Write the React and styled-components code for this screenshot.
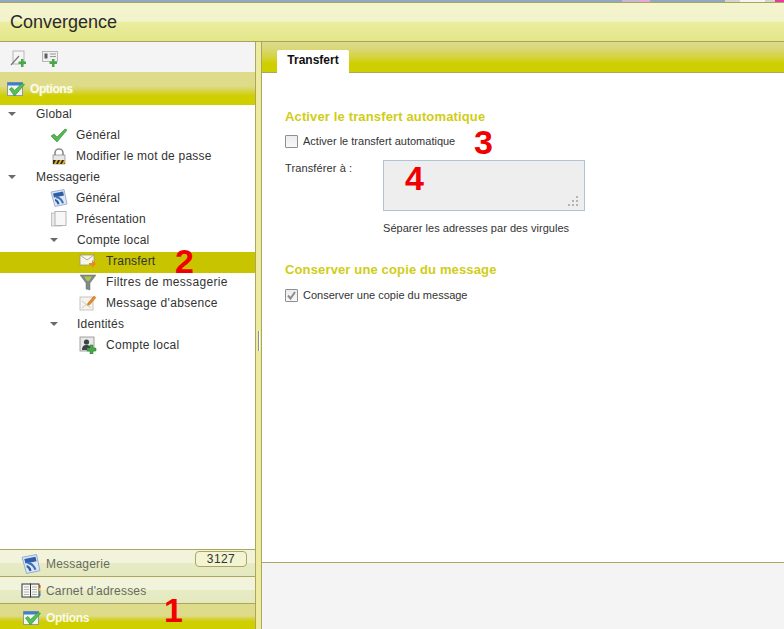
import styled, { createGlobalStyle } from "styled-components";

const GlobalStyle = createGlobalStyle`
  html, body {
    margin: 0;
    padding: 0;
    height: 100%;
    overflow: hidden;
    background: #fff;
  }
  #root {
    height: 100%;
  }
`;

const Page = styled.div`
  position: relative;
  width: 784px;
  height: 629px;
  display: flex;
  flex-direction: column;
  font-family: "Liberation Sans", Arial, sans-serif;
  font-size: 12px;
  color: #333;
  overflow: hidden;
`;

const TopStrip = styled.div`
  height: 3px;
  flex: none;
  box-sizing: border-box;
  border-bottom: 1px solid #a9a65a;
  background: linear-gradient(
    90deg,
    #8fa9c4 0 622px,
    #c8b6d4 622px 640px,
    #e8a8dc 640px 650px,
    #8fa9c4 650px 725px,
    #d8d4cc 725px 740px,
    #f4f4f4 740px 765px,
    #d8d4cc 765px 775px,
    #e83a9a 775px 784px
  );
`;

const Header = styled.div`
  height: 39px;
  flex: none;
  box-sizing: border-box;
  border-bottom: 1px solid #a8a35c;
  background: linear-gradient(180deg, #f4f5d0 0%, #f2f3cb 48%, #ebeda0 50%, #e3e688 100%);
  padding: 9px 0 0 10px;
  font-size: 18px;
  color: #2a2a2a;
`;

const Body = styled.div`
  flex: 1;
  display: flex;
  min-height: 0;
`;

const Sidebar = styled.div`
  width: 255px;
  flex: none;
  display: flex;
  flex-direction: column;
`;

const Toolbar = styled.div`
  height: 30px;
  flex: none;
  display: flex;
  align-items: center;
  gap: 15px;
  padding: 2px 0 0 10px;
  box-sizing: border-box;
  background: #f4f4f4;
`;

const ToolIcon = styled.svg`
  width: 17px;
  height: 17px;
  display: block;
`;

const Band = styled.div`
  height: 33px;
  flex: none;
  display: flex;
  align-items: center;
  gap: 5px;
  padding-left: 7px;
  box-sizing: border-box;
  background: linear-gradient(180deg, #dedb8b 0%, #dedb8b 42%, #d4d233 62%, #cfcf00 72%, #cfcf00 100%);
  color: #fbfbe8;
  font-weight: bold;
  letter-spacing: -0.4px;
  text-shadow: 0 0 2px #e8e8a8;
`;

const Tree = styled.div`
  flex: 1;
  min-height: 0;
  background: #fff;
`;

const Row = styled.div`
  height: 21px;
  box-sizing: border-box;
  padding-bottom: 3px;
  display: flex;
  align-items: center;
  padding-left: ${(p) => p.$indent}px;
  background: ${(p) => (p.$selected ? "#c8c400" : "transparent")};
  color: #333;
  letter-spacing: ${(p) => p.$spacing || 0.2}px;
`;

const Arrow = styled.span`
  width: 0;
  height: 0;
  flex: none;
  margin-right: ${(p) => p.$gap}px;
  margin-top: -1px;
  border-left: 4px solid transparent;
  border-right: 4px solid transparent;
  border-top: 4px solid #6a6a6a;
`;

const RowIcon = styled.span`
  width: 18px;
  height: 18px;
  flex: none;
  margin-right: ${(p) => p.$gap}px;
  display: flex;
  align-items: center;
  justify-content: center;
`;

const Svg = styled.svg`
  width: 18px;
  height: 18px;
  display: block;
`;

const Accordion = styled.div`
  height: 27px;
  flex: none;
  display: flex;
  align-items: center;
  box-sizing: border-box;
  padding: 2px 8px 0 21px;
  gap: 5px;
  border-top: 1px solid #aca75e;
  background: linear-gradient(180deg, #f1f4da 0%, #f1f4da 50%, #e6ebc4 52%, #e4e9bf 100%);
  color: #6a6a5c;
  letter-spacing: 0.2px;
`;

const ActiveAccordion = styled(Accordion)`
  height: 26px;
  padding: 3px 8px 0 23px;
  background: linear-gradient(180deg, #dedb8b 0%, #dedb8b 48%, #d4d233 60%, #cfcf00 72%, #cfcf00 100%);
  color: #fbfbe8;
  font-weight: bold;
  letter-spacing: -0.3px;
`;

const AccordionLabel = styled.span`
  flex: 1;
`;

const Count = styled.span`
  width: 52px;
  height: 16px;
  margin-top: -10px;
  box-sizing: border-box;
  border: 1px solid #aca75e;
  border-radius: 4px;
  background: #f3f4d2;
  color: #333;
  display: flex;
  align-items: center;
  justify-content: center;
  letter-spacing: 0.4px;
`;

const Splitter = styled.div`
  width: 7px;
  flex: none;
  box-sizing: border-box;
  background: #eceb9f;
  border-left: 1px solid #aca75e;
  border-right: 1px solid #aca75e;
  display: flex;
  align-items: center;
  justify-content: center;
`;

const Grip = styled.div`
  width: 2px;
  height: 20px;
  margin-top: 10px;
  background: linear-gradient(90deg, #8a8f96 50%, #fff 50%);
`;

const Main = styled.div`
  flex: 1;
  min-width: 0;
  display: flex;
  flex-direction: column;
`;

const TabBar = styled.div`
  height: 31px;
  flex: none;
  box-sizing: border-box;
  padding: 8px 0 0 15px;
  border-bottom: 1px solid #aca75e;
  background: linear-gradient(180deg, #dedb8b 0%, #dad87c 20%, #d4d233 55%, #cfcf00 70%, #cfcf00 100%);
`;

const Tab = styled.div`
  width: 72px;
  height: 23px;
  box-sizing: border-box;
  background: #fff;
  border-radius: 2px 2px 0 0;
  color: #111;
  font-weight: bold;
  text-align: center;
  padding-top: 3px;
`;

const Content = styled.div`
  flex: 1;
  min-height: 0;
  background: #fff;
  padding: 36px 0 0 23px;
  box-sizing: border-box;
`;

const SectionTitle = styled.div`
  color: #d0cd16;
  font-size: 13px;
  font-weight: bold;
  line-height: 15px;
  letter-spacing: 0.14px;
`;

const CheckRow = styled.div`
  display: flex;
  align-items: center;
  gap: 5px;
  height: 16px;
  margin-top: ${(p) => p.$top}px;
  font-size: 11px;
  color: #333;
`;

const Box = styled.span`
  width: 13px;
  height: 13px;
  box-sizing: border-box;
  border: 1px solid #8f8f8f;
  border-radius: 1px;
  background: linear-gradient(180deg, #ececec, #f8f8f8);
  display: flex;
  align-items: center;
  justify-content: center;
`;

const FormRow = styled.div`
  display: flex;
  margin-top: 11px;
`;

const FieldLabel = styled.div`
  width: 98px;
  flex: none;
  font-size: 11px;
  line-height: 13px;
  letter-spacing: 0.12px;
  padding-top: 2px;
  color: #333;
`;

const Field = styled.div`
  position: relative;
  width: 202px;
  height: 51px;
  box-sizing: border-box;
  border: 1px solid #b0c4d8;
  background: #eeeeee;
`;

const ResizeGrip = styled.svg`
  position: absolute;
  right: 5px;
  bottom: 4px;
  width: 11px;
  height: 11px;
`;

const Hint = styled.div`
  margin: 11px 0 0 98px;
  font-size: 11px;
  line-height: 13px;
  color: #333;
  letter-spacing: 0.04px;
`;

const SecondTitle = styled(SectionTitle)`
  margin-top: 27px;
`;

const Footer = styled.div`
  height: 67px;
  flex: none;
  box-sizing: border-box;
  border-top: 1px solid #aca75e;
  background: #f4f4f4;
`;

const Marker = styled.span`
  position: absolute;
  left: ${(p) => p.$x}px;
  top: ${(p) => p.$y}px;
  color: #f00000;
  font-size: 34px;
  line-height: 26px;
  font-weight: bold;
`;

const OptionsIcon = () => (
  <svg width="18" height="18" viewBox="0 0 18 18" style={{ display: "block" }}>
    <rect x="0.5" y="2.5" width="15" height="13" fill="#f4f4ee" stroke="#8a9aa8" />
    <rect x="0.5" y="2.5" width="15" height="3" fill="#3f7fc8" />
    <path d="M2.5 9l2.5-1.5 2.5 3 7.5-7 2.5 1-10 11.5z" fill="#55c055" stroke="#2c8a2c" strokeWidth="0.6" />
  </svg>
);

const CheckIcon = () => (
  <Svg viewBox="0 0 18 18">
    <path d="M1 10l3-2 3 3 8-8 2 1-10 12z" fill="#55b855" stroke="#2e8a2e" strokeWidth="0.6" />
  </Svg>
);

const LockIcon = () => (
  <Svg viewBox="0 0 18 18">
    <path d="M5 9V6a4 4 0 0 1 8 0v3" fill="none" stroke="#8d8d8d" strokeWidth="1.6" />
    <rect x="3" y="8" width="12" height="9" fill="#e8e8e8" stroke="#777" strokeWidth="0.6" />
    <rect x="3" y="13" width="12" height="4" fill="#2c2c2c" />
    <path d="M4 17l2-4h2l-2 4zm4 0l2-4h2l-2 4zm4 0l2-4h1v3l-1 1z" fill="#e0b020" />
  </Svg>
);

const MailAppIcon = ({ size = 18 }) => (
  <svg width={size} height={size} viewBox="0 0 18 18" style={{ display: "block" }}>
    <path d="M1 3l13-2.5 3 14.500-12 2.500z" fill="#dfe7f4" stroke="#8ea2c8" strokeWidth="0.8" />
    <path d="M3 4.500l10-2 1 4-10 2z" fill="#2d5ea8" />
    <path d="M5 7c4 0 7 2 9 7l-2 .5c-1-3-3-5-6-5.500z" fill="#3a74c0" />
    <path d="M5 10c2 .5 4 2 4.500 5l-2 .5c-.5-2-1.500-3-2.500-3.500z" fill="#2d5ea8" />
  </svg>
);

const PagesIcon = () => (
  <Svg viewBox="0 0 18 18">
    <rect x="1.5" y="3" width="10" height="13" fill="#e9e9e9" stroke="#b5b5b5" strokeWidth="0.8" />
    <rect x="5" y="1.5" width="11" height="14" fill="#f7f7f7" stroke="#a6a6a6" strokeWidth="0.8" />
  </Svg>
);

const ForwardIcon = () => (
  <Svg viewBox="0 0 18 18">
    <rect x="1" y="3" width="14" height="10" fill="#f7f6ee" stroke="#9a9a80" strokeWidth="0.8" />
    <path d="M1 3l7 5 7-5" fill="none" stroke="#a0a080" strokeWidth="0.8" />
    <path d="M10 11h3V8l4 4-4 4v-3h-3z" fill="#e88a22" />
  </Svg>
);

const FilterIcon = () => (
  <Svg viewBox="0 0 18 18">
    <path d="M1 2h16l-6 8v7l-4-1v-6z" fill="#7f8a88" stroke="#69736f" strokeWidth="0.5" />
    <path d="M5 3.500h8l-3 4.500h-2z" fill="#a8c84a" />
  </Svg>
);

const AbsenceIcon = () => (
  <Svg viewBox="0 0 18 18">
    <rect x="1" y="3" width="13" height="13" fill="#f4f4f0" stroke="#b8b8ae" strokeWidth="0.8" />
    <path d="M3 7l9 7M12 7l-9 7" stroke="#c4c0a8" strokeWidth="0.8" />
    <path d="M9 9l6-7 2 1.500-6 7-2.500 1z" fill="#e88a22" stroke="#b85a18" strokeWidth="0.4" />
  </Svg>
);

const AccountIcon = () => (
  <Svg viewBox="0 0 18 18">
    <rect x="1" y="1" width="14" height="14" fill="#e8e8e4" stroke="#8d8d8d" strokeWidth="0.8" />
    <circle cx="7.5" cy="6" r="2.6" fill="#3d4448" />
    <path d="M3 14c0-4 2-5 4.500-5s4.500 1 4.500 5z" fill="#3d4448" />
    <path d="M11 9h3v3h3v3h-3v3h-3v-3H8v-3h3z" fill="#48a848" stroke="#2c7a2c" strokeWidth="0.5" />
  </Svg>
);

const BookIcon = () => (
  <svg width="20" height="18" viewBox="0 0 20 18" style={{ display: "block" }}>
    <rect x="1" y="2" width="8.500" height="13" fill="#f6f6f2" stroke="#333" strokeWidth="1" />
    <rect x="9.500" y="2" width="8.500" height="13" fill="#f6f6f2" stroke="#333" strokeWidth="1" />
    <path d="M3 5h5M3 7.500h5M3 10h5M3 12.500h5M11 5h5M11 7.500h5M11 10h5M11 12.500h5" stroke="#a5a5a5" strokeWidth="0.8" />
    <rect x="18" y="3" width="1.500" height="3" fill="#d8402c" />
    <rect x="18" y="6" width="1.500" height="3" fill="#e8b020" />
    <rect x="18" y="9" width="1.500" height="3" fill="#4a9a44" />
    <rect x="18" y="12" width="1.500" height="2" fill="#3f6fc0" />
  </svg>
);

const App = () => {
  return (
    <Page>
      <GlobalStyle />
      <TopStrip />
      <Header>Convergence</Header>
      <Body>
        <Sidebar>
          <Toolbar>
            <ToolIcon viewBox="0 0 17 17">
              <rect x="3" y="1" width="11" height="13" fill="#f6f6f6" stroke="#a8a8a8" strokeWidth="0.8" />
              <path d="M1 15L9 6" stroke="#777" strokeWidth="1.2" />
              <path d="M11 9h2.500v2.500H16v2.500h-2.500V17H11v-3H8.500v-2.500H11z" fill="#46a846" />
            </ToolIcon>
            <ToolIcon viewBox="0 0 17 17">
              <rect x="0.5" y="1.5" width="15" height="10" fill="#f0f0f0" stroke="#a8a8a8" strokeWidth="0.8" />
              <rect x="2.500" y="3.500" width="3" height="5" fill="#5a6066" />
              <path d="M8 4h6M8 6.500h6" stroke="#9a9a9a" />
              <path d="M10 9h2.500v2.500H15V14h-2.500v3H10v-3H7.500v-2.500H10z" fill="#46a846" />
            </ToolIcon>
          </Toolbar>
          <Band>
            <OptionsIcon />
            Options
          </Band>
          <Tree>
            <Row $indent={8}><Arrow $gap={20} />Global</Row>
            <Row $indent={50}><RowIcon $gap={8}><CheckIcon /></RowIcon>Général</Row>
            <Row $indent={50}><RowIcon $gap={8}><LockIcon /></RowIcon>Modifier le mot de passe</Row>
            <Row $indent={8}><Arrow $gap={20} />Messagerie</Row>
            <Row $indent={50}><RowIcon $gap={8}><MailAppIcon /></RowIcon>Général</Row>
            <Row $indent={50}><RowIcon $gap={8}><PagesIcon /></RowIcon>Présentation</Row>
            <Row $indent={50}><Arrow $gap={19} />Compte local</Row>
            <Row $indent={79} $selected><RowIcon $gap={9}><ForwardIcon /></RowIcon>Transfert</Row>
            <Row $indent={79} $spacing={0.34}><RowIcon $gap={9}><FilterIcon /></RowIcon>Filtres de messagerie</Row>
            <Row $indent={79} $spacing={0.32}><RowIcon $gap={9}><AbsenceIcon /></RowIcon>Message d'absence</Row>
            <Row $indent={50}><Arrow $gap={19} />Identités</Row>
            <Row $indent={79} $spacing={0.28}><RowIcon $gap={9}><AccountIcon /></RowIcon>Compte local</Row>
          </Tree>
          <Accordion>
            <MailAppIcon size={20} />
            <AccordionLabel>Messagerie</AccordionLabel>
            <Count>3127</Count>
          </Accordion>
          <Accordion>
            <BookIcon />
            <AccordionLabel>Carnet d'adresses</AccordionLabel>
          </Accordion>
          <ActiveAccordion>
            <OptionsIcon />
            <AccordionLabel>Options</AccordionLabel>
          </ActiveAccordion>
        </Sidebar>
        <Splitter><Grip /></Splitter>
        <Main>
          <TabBar><Tab>Transfert</Tab></TabBar>
          <Content>
            <SectionTitle>Activer le transfert automatique</SectionTitle>
            <CheckRow $top={9}><Box />Activer le transfert automatique</CheckRow>
            <FormRow>
              <FieldLabel>Transférer à :</FieldLabel>
              <Field>
                <ResizeGrip viewBox="0 0 11 11">
                  <path d="M8 1h2v2H8zM4 5h2v2H4zM8 5h2v2H8zM0 9h2v2H0zM4 9h2v2H4zM8 9h2v2H8z" fill="#b4b4b4" />
                </ResizeGrip>
              </Field>
            </FormRow>
            <Hint>Séparer les adresses par des virgules</Hint>
            <SecondTitle>Conserver une copie du message</SecondTitle>
            <CheckRow $top={10}>
              <Box>
                <svg width="11" height="11" viewBox="0 0 11 11">
                  <path d="M2 5.500l2.500 3L9 2" fill="none" stroke="#8d8d8d" strokeWidth="2" />
                </svg>
              </Box>
              Conserver une copie du message
            </CheckRow>
          </Content>
          <Footer />
        </Main>
      </Body>
      <Marker $x={164} $y={597}>1</Marker>
      <Marker $x={175} $y={248}>2</Marker>
      <Marker $x={474} $y={129}>3</Marker>
      <Marker $x={405} $y={165}>4</Marker>
    </Page>
  );
};

export default App;
